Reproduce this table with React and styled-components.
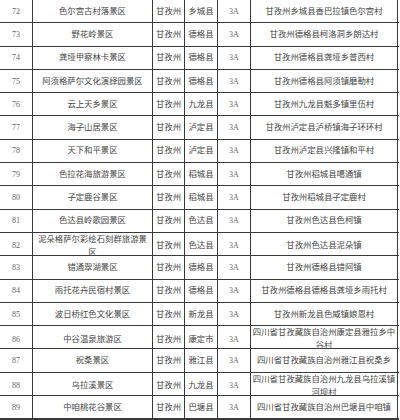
import React from "react";
import styled, { createGlobalStyle } from "styled-components";

const GlobalStyle = createGlobalStyle`
  html, body {
    margin: 0;
    padding: 0;
    background: #ffffff;
    overflow: hidden;
  }
`;

const rows = [
  ["72", "色尔宫古村落景区", "甘孜州", "乡城县", "3A", "甘孜州乡城县香巴拉镇色尔宫村"],
  ["73", "野花岭景区", "甘孜州", "德格县", "3A", "甘孜州德格县柯洛洞乡朗达村"],
  ["74", "龚垭甲察林卡景区", "甘孜州", "德格县", "3A", "甘孜州德格县龚垭乡普西村"],
  ["75", "阿须格萨尔文化演绎园景区", "甘孜州", "德格县", "3A", "甘孜州德格县阿须镇磨勒村"],
  ["76", "云上天乡景区", "甘孜州", "九龙县", "3A", "甘孜州九龙县魁多镇里伍村"],
  ["77", "海子山居景区", "甘孜州", "泸定县", "3A", "甘孜州泸定县泸桥镇海子环环村"],
  ["78", "天下和平景区", "甘孜州", "泸定县", "3A", "甘孜州泸定县兴隆镇和平村"],
  ["79", "色拉花海旅游景区", "甘孜州", "稻城县", "3A", "甘孜州稻城县噶通镇"],
  ["80", "子定鹿谷景区", "甘孜州", "稻城县", "3A", "甘孜州稻城县子定鹿村"],
  ["81", "色达县岭歌园景区", "甘孜州", "色达县", "3A", "甘孜州色达县色柯镇"],
  ["82", "泥朵格萨尔彩绘石刻群旅游景区", "甘孜州", "色达县", "3A", "甘孜州色达县泥朵镇"],
  ["83", "错通翠湖景区", "甘孜州", "德格县", "3A", "甘孜州德格县错阿镇"],
  ["84", "雨托花卉民宿村景区", "甘孜州", "德格县", "3A", "甘孜州德格县德格县龚垭乡雨托村"],
  ["85", "波日桥红色文化景区", "甘孜州", "新龙县", "3A", "甘孜州新龙县色威镇娘恩村"],
  ["86", "中谷温泉旅游区", "甘孜州", "康定市", "3A", "四川省甘孜藏族自治州康定县雅拉乡中谷村"],
  ["87", "祝桑景区", "甘孜州", "雅江县", "3A", "四川省甘孜藏族自治州雅江县祝桑乡"],
  ["88", "乌拉溪景区", "甘孜州", "九龙县", "3A", "四川省甘孜藏族自治州九龙县乌拉溪镇河坝村"],
  ["89", "中咱桃花谷景区", "甘孜州", "巴塘县", "3A", "四川省甘孜藏族自治州巴塘县中咱镇"],
];

const Table = styled.div`
  width: 399px;
  margin: -1px 0 0 -1px;
  border-left: 1px solid #3a3a3a;
  border-top: 1px solid #3a3a3a;
  font-family: "Liberation Serif", "Noto Sans CJK SC", serif;
  font-size: 8.4px;
  color: #444;
`;

const Row = styled.div`
  display: grid;
  grid-template-columns: 33px 120px 32px 33px 33px 147px;
  height: ${(p) => (p.$last ? "24px" : "23.3px")};
  box-sizing: border-box;
  border-bottom: ${(p) => (p.$last ? "2px" : "1px")} solid #3a3a3a;
`;

const Cell = styled.div`
  display: flex;
  align-items: center;
  justify-content: center;
  text-align: center;
  box-sizing: border-box;
  border-right: 1px solid #3a3a3a;
  padding: 0 1px;
  line-height: 13px;
  min-width: 0;
  overflow: visible;
  font-size: ${(p) => (p.$num ? "8px" : "8.4px")};
  color: ${(p) => (p.$num ? "#666" : "#444")};
`;

export default function App() {
  return (
    <>
      <GlobalStyle />
      <Table>
        {rows.map((r, i) => (
          <Row key={r[0]} $last={i === rows.length - 1}>
            {r.map((c, j) => (
              <Cell key={j} $num={j === 0 || j === 4}>
                {c}
              </Cell>
            ))}
          </Row>
        ))}
      </Table>
    </>
  );
}
